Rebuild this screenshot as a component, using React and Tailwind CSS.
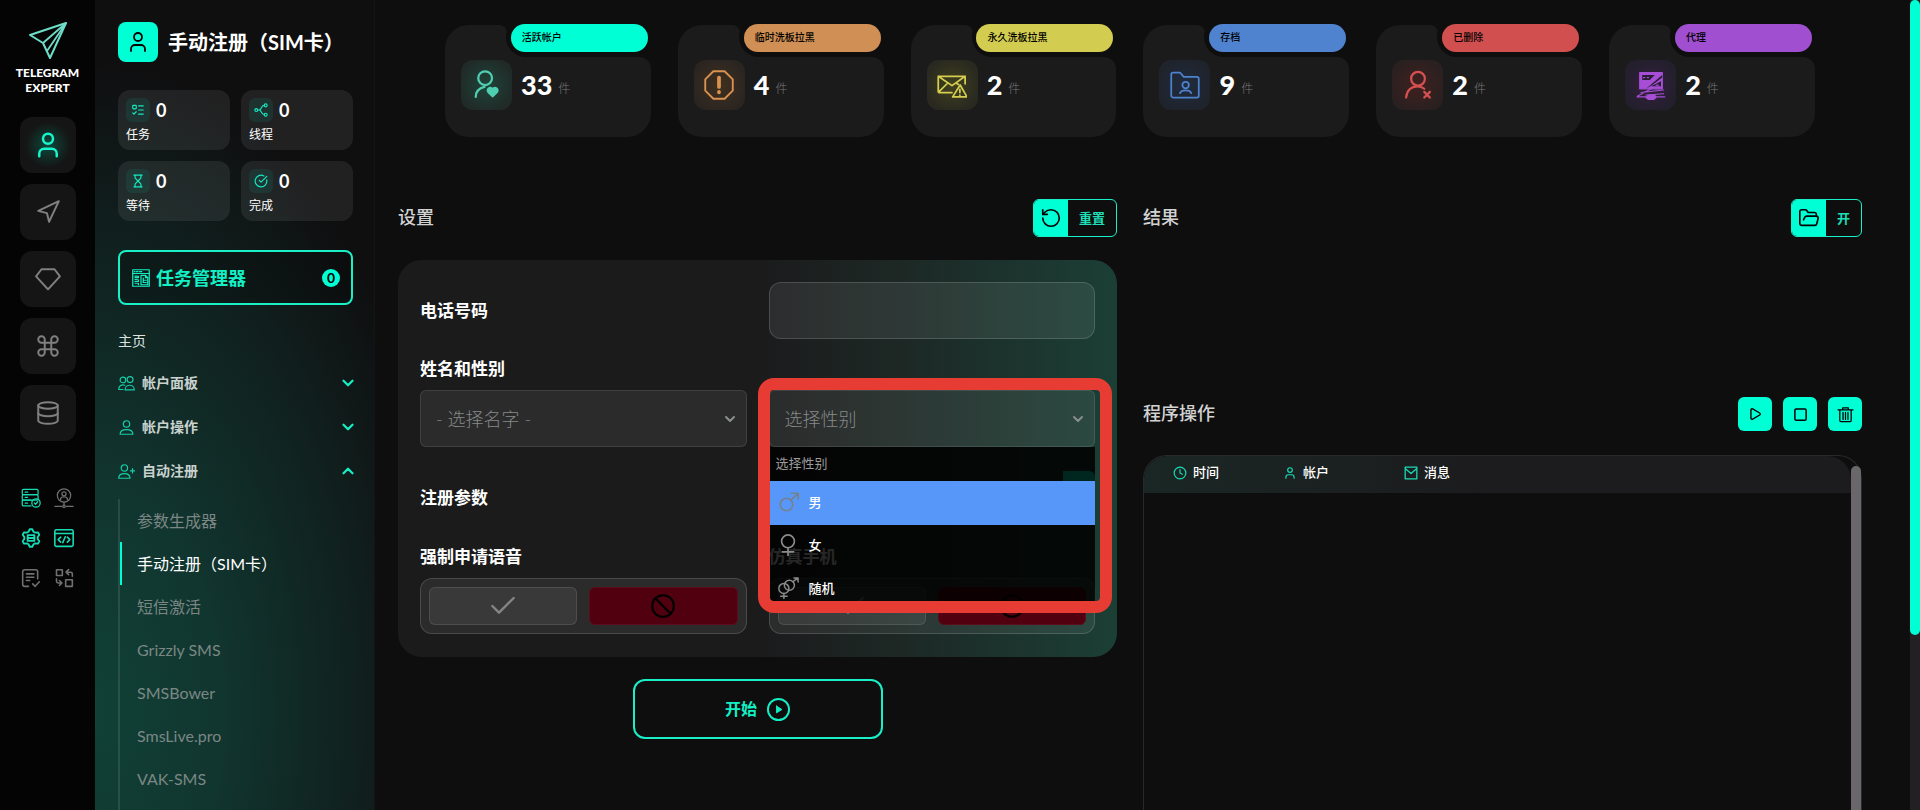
import React from 'react';
import {
  User,
  Navigation,
  Command,
  Database,
  ListTodo,
  Hourglass,
  CircleCheckBig,
  ChevronDown,
  ChevronUp,
  RotateCcw,
  FolderOpen,
  Check,
  Ban,
  Play,
  Square,
  Clock,
} from 'lucide-react';

const Icon = ({ className, sw = 1.5, children }) => (
  <svg
    className={className}
    viewBox="0 0 24 24"
    fill="none"
    stroke="currentColor"
    strokeWidth={sw}
    strokeLinecap="round"
    strokeLinejoin="round"
    aria-hidden="true"
  >
    {children}
  </svg>
);

const Logo = () => (
  <svg className="w-10 h-10" viewBox="0 0 40 40" fill="none" stroke="#6fdcc9" strokeWidth="2" strokeLinejoin="round">
    <path d="M38 3 2 15l13 8 7 15L38 3Z" />
    <path d="M38 3 15 23M38 3 19 31" strokeWidth="1.8" />
  </svg>
);

const DiamondIcon = ({ className }) => (
  <Icon className={className} sw={1.8}>
    <path d="M6 3h12l5 6.500L12 21.500 1 9.500 6 3Z" />
  </Icon>
);

const ThreadsIcon = ({ className }) => (
  <Icon className={className} sw={2}>
    <circle cx="4" cy="12" r="2.500" />
    <circle cx="20" cy="4" r="2.500" />
    <circle cx="20" cy="20" r="2.500" />
    <path d="M6.500 12H9c4 0 3-8 8.500-8M9 12c4 0 3 8 8.500 8" />
  </Icon>
);

const TaskManagerIcon = ({ className }) => (
  <Icon className={className} sw={1.6}>
    <rect x="1" y="1" width="22" height="22" />
    <path d="M1 6h22M3 3.500h1M6 3.500h2M10 3.500h3" />
    <path d="M4 9.500h3M4 14h3M4 19h3M4 11.500h4.500v-2M4 16.500h4.500v-2M8.500 19v2" />
    <path d="M12 8.500h6l3 3V21h-9V8.500Z" />
    <path d="M15 12v6M15 15h4M15 18h4M18 8.500v3h3" />
  </Icon>
);

const GroupIcon = ({ className }) => (
  <Icon className={className} sw={1.6}>
    <circle cx="7" cy="7" r="4" />
    <circle cx="17" cy="6.500" r="4.200" />
    <path d="M10 21h13c0-4-3-6.500-6.500-6.500S10 17 10 21ZM9.500 14.500C5 12.800 1 15 1 20.500h6" />
  </Icon>
);

const PersonIcon = ({ className }) => (
  <Icon className={className} sw={1.7}>
    <circle cx="12" cy="7" r="4.500" />
    <path d="M3 21.500c0-4.500 4-6.500 9-6.500s9 2 9 6.500H3Z" />
  </Icon>
);

const PersonPlusIcon = ({ className }) => (
  <Icon className={className} sw={1.7}>
    <circle cx="9" cy="7" r="4.500" />
    <path d="M1 21.500C1 17 5 15 9 15s8 2 8 6.500H1ZM20.500 8v6M17.500 11h6" />
  </Icon>
);

const ServerCheckIcon = ({ className }) => (
  <Icon className={className}>
    <rect x="1.500" y="1.500" width="19" height="6.500" rx="1.500" />
    <rect x="1.500" y="8" width="19" height="6.500" rx="1.500" />
    <path d="M12 21.500H3A1.500 1.500 0 0 1 1.500 20v-5.500H12M5 5h3M5 11.200h3M5 18h3" />
    <circle cx="18" cy="18" r="5" />
    <path d="m16 18 1.500 1.500 2.500-3" />
  </Icon>
);

const ProxyUserIcon = ({ className }) => (
  <Icon className={className}>
    <circle cx="12" cy="9" r="8" />
    <circle cx="12" cy="7" r="2.500" />
    <path d="M8 14v-1c0-3 8-3 8 0v1M12 17v4M1 22h8M15 22h8" />
    <circle cx="12" cy="22" r="1.500" />
  </Icon>
);

const GearServerIcon = ({ className }) => (
  <Icon className={className} sw={2.2}>
    <path d="M9 4.500 10.500 1.500h3L15 4.500l2 1 3.300-.3 1.700 2.800-2 2.800v2.400l2 2.800-1.700 2.800-3.300-.3-2 1-1.500 3h-3L9 19.500l-2-1-3.300.3L2 16l2-2.800v-2.400L2 8l1.700-2.800 3.300.3 2-1Z" />
    <rect x="8" y="8.500" width="8" height="3.500" />
    <rect x="8" y="12" width="8" height="3.500" />
  </Icon>
);

const CodeWindowIcon = ({ className }) => (
  <Icon className={className} sw={1.900}>
    <rect x="1" y="2" width="22" height="20" rx="2" />
    <path d="M1 6.500h22M8 11l-3 3 3 3M16 11l3 3-3 3M13.500 10.500l-3 7" />
  </Icon>
);

const DocCheckIcon = ({ className }) => (
  <Icon className={className} sw={1.900}>
    <path d="M20 13V4.500A2.500 2.500 0 0 0 17.500 2h-13A2.500 2.500 0 0 0 2 4.500v15A2.500 2.500 0 0 0 4.500 22H9M6.500 7h9M6.500 11h9M6.500 15h4M14 19l3 3 5-5.500" />
  </Icon>
);

const SwapIcon = ({ className }) => (
  <Icon className={className} sw={1.900}>
    <rect x="3" y="2" width="7" height="7" />
    <rect x="14" y="14" width="8" height="8" />
    <path d="M22 10V7a2 2 0 0 0-2-2h-5m2.500-3-3 3 3 3M3 13v3a2 2 0 0 0 2 2h4m-2.500-3 3 3-3 3" />
  </Icon>
);

const UserHeartIcon = ({ className }) => (
  <Icon className={className} sw={1.8}>
    <circle cx="10.500" cy="6.500" r="5.500" />
    <path d="M3 21.500c0-4.500 3-7 7-8" />
    <path d="M16.500 21 13 17.500c-1.500-2 1.500-4.500 3.500-2.200 2-2.300 5 .2 3.500 2.200L16.500 21Z" fill="currentColor" />
  </Icon>
);

const OctagonIcon = ({ className }) => (
  <Icon className={className} sw={1.500}>
    <path d="M7.500 1h9L23 7.500v9L16.500 23h-9L1 16.500v-9L7.500 1Z" />
    <path d="M12 6v7.500M12 17.500v.3" strokeWidth="3" />
  </Icon>
);

const MailAlertIcon = ({ className }) => (
  <Icon className={className} sw={1.400}>
    <path d="M12 18H1.500A1 1 0 0 1 1 17V5h21.500v6M1 5l11 7.500L22.500 5M1.500 17.500 8 11M16 11l1 .5" />
    <path d="M18.500 12 24 21.500H12.500L18.500 12ZM18.300 15.500v2.500M18.300 20v.2" />
  </Icon>
);

const FolderUserIcon = ({ className }) => (
  <Icon className={className} sw={1.400}>
    <path d="M1 3.500A1.500 1.500 0 0 1 2.500 2H8l3 3.500h10.500A1.500 1.500 0 0 1 23 7v13.500a1.500 1.500 0 0 1-1.500 1.500h-19A1.500 1.500 0 0 1 1 20.500v-17Z" />
    <circle cx="12.500" cy="12" r="2.600" />
    <path d="M8 18.500c1-3 8-3 9 0" />
  </Icon>
);

const UserXIcon = ({ className }) => (
  <Icon className={className} sw={1.800}>
    <circle cx="12" cy="7" r="5.500" />
    <path d="M2.500 22c.5-5.500 4-9 9-9 2 0 4 .7 5.500 2M17 17.500l4.500 4.500M21.500 17.500 17 22" />
  </Icon>
);

const ProxyServerIcon = ({ className }) => (
  <Icon className={className} sw={1}>
    <path d="M3 2h18v13H3Z" fill="currentColor" />
    <path d="M5 4h10l-4 4H5ZM12 13l8-4v4ZM8 15l13-11v2L13 12Z" fill="#291c33" stroke="none" />
    <path d="M6 6h1M9 6h1M16 12h2" />
    <path d="M1 21 14 14M4 18l18-2M8 20l14-1M1 21.500h22" />
    <path d="M10 20h5l1 2-2 1.500h-4L8 22Z" fill="currentColor" />
  </Icon>
);

const MailSquareIcon = ({ className }) => (
  <Icon className={className} sw={2.200}>
    <rect x="2" y="2" width="20" height="20" />
    <path d="m3 5 9 8 9-8" />
  </Icon>
);

const TrashIcon = ({ className }) => (
  <Icon className={className} sw={1.800}>
    <path d="M1.500 5.500h21M8 5V2.500h8V5M4 6v14.500A1.500 1.500 0 0 0 5.500 22h13a1.500 1.500 0 0 0 1.500-1.500V6M8.500 9v10M12 9v10M15.500 9v10" />
  </Icon>
);

const MaleIcon = ({ className }) => (
  <Icon className={className} sw={2}>
    <circle cx="9" cy="15" r="7.500" />
    <path d="m14.500 9.500 8-7.500M15 1.500h8v7" />
  </Icon>
);

const FemaleIcon = ({ className }) => (
  <Icon className={className} sw={1.800}>
    <circle cx="12" cy="8" r="7" />
    <path d="M12 15v9M6 19.500h12" />
  </Icon>
);

const BothIcon = ({ className }) => (
  <Icon className={className} sw={1.600}>
    <circle cx="7.500" cy="12.500" r="5.500" />
    <circle cx="13.500" cy="9" r="5.500" />
    <path d="M17.500 5 23 1M18.500 1H23v4.500M7.500 18v6M4 21h7" />
  </Icon>
);

const CirclePlayIcon = ({ className }) => (
  <Icon className={className} sw={2}>
    <circle cx="12" cy="12" r="11" />
    <path d="M10 8.500v7l5.500-3.500L10 8.500Z" fill="currentColor" strokeWidth="1" />
  </Icon>
);

const railButtons = [
  { name: 'accounts', icon: User, active: true },
  { name: 'send', icon: Navigation },
  { name: 'premium', icon: DiamondIcon },
  { name: 'commands', icon: Command },
  { name: 'storage', icon: Database },
];

const railTools = [
  { name: 'server', icon: ServerCheckIcon, on: true },
  { name: 'proxy', icon: ProxyUserIcon },
  { name: 'config', icon: GearServerIcon, on: true },
  { name: 'code', icon: CodeWindowIcon, on: true },
  { name: 'log', icon: DocCheckIcon },
  { name: 'convert', icon: SwapIcon },
];

const counters = [
  { label: '任务', icon: ListTodo },
  { label: '线程', icon: ThreadsIcon },
  { label: '等待', icon: Hourglass },
  { label: '完成', icon: CircleCheckBig },
];

const menu = [
  { label: '帐户面板', icon: GroupIcon },
  { label: '帐户操作', icon: PersonIcon },
  { label: '自动注册', icon: PersonPlusIcon, open: true },
];

const subMenu = ['参数生成器', '手动注册（SIM卡）', '短信激活', 'Grizzly SMS', 'SMSBower', 'SmsLive.pro', 'VAK-SMS'];

const stats = [
  { label: '活跃帐户', value: 33, icon: UserHeartIcon, pill: 'bg-[#00ffd5]', color: 'text-[#4fceb1]', glow: 'bg-[radial-gradient(circle,#1f4439,#202b28_75%)]' },
  { label: '临时洗板拉黑', value: 4, icon: OctagonIcon, pill: 'bg-[#d08f54]', color: 'text-[#d9924f]', glow: 'bg-[radial-gradient(circle,#40301f,#2b2521_75%)]' },
  { label: '永久洗板拉黑', value: 2, icon: MailAlertIcon, pill: 'bg-[#d2cc51]', color: 'text-[#d5ce4f]', glow: 'bg-[radial-gradient(circle,#41401f,#292920_75%)]' },
  { label: '存档', value: 9, icon: FolderUserIcon, pill: 'bg-[#5083cf]', color: 'text-[#4d82cf]', glow: 'bg-[radial-gradient(circle,#202c40,#1f232b_75%)]' },
  { label: '已删除', value: 2, icon: UserXIcon, pill: 'bg-[#d1504f]', color: 'text-[#d4514f]', glow: 'bg-[radial-gradient(circle,#402020,#2b2020_75%)]' },
  { label: '代理', value: 2, icon: ProxyServerIcon, pill: 'bg-[#9f4fd0]', color: 'text-[#a64fd6]', glow: 'bg-[radial-gradient(circle,#35203f,#231f2d_75%)]' },
];

const Rail = () => (
  <aside className="w-[95px] shrink-0 bg-[#040404] flex flex-col items-center pt-5">
    <Logo />
    <div className="mt-[5px] text-center text-xs leading-[15px] font-black text-white">
      TELEGRAM
      <br />
      EXPERT
    </div>
    <nav className="mt-[22px] flex flex-col gap-[11px]">
      {railButtons.map(({ name, icon: I, active }) => (
        <button key={name} aria-label={name} className="w-14 h-14 rounded-xl bg-[#151515] flex items-center justify-center">
          {active ? (
            <span className="p-2 rounded-full bg-[radial-gradient(circle,#0b4a3d,transparent_70%)]">
              <I className="w-[30px] h-[30px] text-[#19f5cb]" strokeWidth={2} />
            </span>
          ) : (
            <I className="w-[26px] h-[26px] text-[#808080]" strokeWidth={1.8} />
          )}
        </button>
      ))}
    </nav>
    <div className="mt-[47px] grid grid-cols-2 gap-x-[13px] gap-y-5">
      {railTools.map(({ name, icon: I, on }) => (
        <button key={name} aria-label={name} className={on ? 'text-[#15dcb4]' : 'text-[#707070]'}>
          <I className="w-5 h-5" />
        </button>
      ))}
    </div>
  </aside>
);

const Sidebar = () => (
  <aside className="w-[280px] shrink-0 pl-[23px] pr-[21px] pt-[22px] bg-[#101211] bg-[radial-gradient(ellipse_130%_80%_at_0%_88%,#104136_0%,#11352f_35%,#101f1d_75%,#0f0f10_100%)] border-r border-[#141414] overflow-hidden">
    <div className="flex items-center gap-[10px]">
      <span className="w-10 h-10 rounded-lg bg-[#00ffd5] text-black flex items-center justify-center">
        <User className="w-6 h-6" strokeWidth={1.8} />
      </span>
      <h1 className="text-xl leading-7 font-bold text-white whitespace-nowrap">手动注册（SIM卡）</h1>
    </div>

    <div className="mt-7 grid grid-cols-2 gap-[11px]">
      {counters.map(({ label, icon: I }) => (
        <div key={label} className="h-[60px] rounded-xl bg-white/8 px-2 pt-2">
          <div className="flex items-center gap-[6px] text-lg leading-6 font-bold text-white">
            <span className="w-6 h-6 rounded-md bg-[#00ffd5]/8 flex items-center justify-center">
              <I className="w-[14px] h-[14px] text-[#17e8bf]" />
            </span>
            0
          </div>
          <div className="mt-[3px] text-xs leading-5 text-white">{label}</div>
        </div>
      ))}
    </div>

    <button className="mt-[29px] w-full h-[55px] pl-3 pr-[11px] rounded-lg border-2 border-[#19f0c8] bg-black/20 flex items-center text-[#13f0c6]">
      <TaskManagerIcon className="w-[18px] h-[18px]" />
      <span className="ml-[6px] text-lg leading-6 font-bold">任务管理器</span>
      <span className="ml-auto w-[18px] h-[18px] rounded-full bg-[#00ffd5] text-black text-sm leading-[18px] font-bold text-center">0</span>
    </button>

    <div className="mt-[26px] text-sm leading-5 text-[#dde2e0]">主页</div>

    <nav className="mt-[10px]">
      {menu.map(({ label, icon: I, open }) => (
        <button key={label} aria-expanded={!!open} className="w-full h-11 flex items-center text-[#c9d2cf]">
          <I className="w-[17px] h-[17px] text-[#15cfa9]" />
          <span className="ml-[7px] text-sm leading-5 font-bold">{label}</span>
          {open ? (
            <ChevronUp className="ml-auto w-[18px] h-[18px] -mr-1 text-[#14efc6]" strokeWidth={3} />
          ) : (
            <ChevronDown className="ml-auto w-[18px] h-[18px] -mr-1 text-[#14efc6]" strokeWidth={3} />
          )}
        </button>
      ))}
      <ul className="mt-[6px] pb-10 border-l-2 border-white/10">
        {subMenu.map((label, i) => (
          <li key={label}>
            <a
              href="#"
              className={
                i === 1
                  ? 'h-[43px] flex items-center pl-[15px] border-l-2 border-[#00ffd5] text-base text-white'
                  : 'h-[43px] flex items-center pl-[17px] text-base text-[#7b8784]'
              }
            >
              {label}
            </a>
          </li>
        ))}
      </ul>
    </nav>
  </aside>
);

const StatCard = ({ label, value, icon: I, pill, color, glow }) => (
  <div className="relative h-28">
    <div className="flex h-8">
      <div className="w-[62px] bg-[#1b1b1c] rounded-tl-3xl rounded-tr-lg" />
      {/* inner curve of the notch under the pill */}
      <div className="w-6 bg-[#1b1b1c] bg-clip-content pt-2 -ml-px">
        <div className="h-full bg-[#0e0e0f] rounded-bl-[20px]" />
      </div>
    </div>
    <div className="h-20 bg-[#1b1b1c] rounded-tr-xl rounded-b-3xl flex items-start pl-4 pt-[3px]">
      <span className={`w-[51px] h-[50px] rounded-xl flex items-center justify-center ${glow}`}>
        <I className={`w-[30px] h-[30px] ${color}`} />
      </span>
      <div className="ml-[9px] h-[50px] flex items-center gap-[6px]">
        <span className="text-[27px] leading-8 font-black text-white">{value}</span>
        <span className="mt-2 text-xs leading-4 font-light text-[#777]">件</span>
      </div>
    </div>
    <div className={`absolute right-[3px] -top-px w-[137px] h-7 rounded-full pl-[11px] text-[10px] leading-[26px] font-medium text-black ${pill}`}>
      {label}
    </div>
  </div>
);

const SplitButton = ({ icon: I, children }) => (
  <button className="h-[38px] flex rounded-md border border-[#19f0c8] overflow-hidden">
    <span className="w-[34px] h-full bg-[#00ffd5] text-black flex items-center justify-center">
      <I className="w-[22px] h-[22px]" strokeWidth={1.8} />
    </span>
    <span className="px-[11px] text-[13px] leading-9 font-bold text-[#1de0ba]">{children}</span>
  </button>
);

const SelectBox = ({ id, children, ...rest }) => (
  <div className="relative">
    <select
      id={id}
      className="appearance-none block w-full h-[57px] pl-[15px] rounded-md border border-white/10 bg-white/7 text-lg font-light text-[#858988] outline-none"
      {...rest}
    >
      <option>{children}</option>
    </select>
    <ChevronDown className="absolute right-[9px] top-[21px] w-4 h-4 text-[#8a8e8c] pointer-events-none" strokeWidth={3} />
  </div>
);

const Toggle = ({ label }) => (
  <div role="group" aria-label={label} className="h-14 p-2 grid grid-cols-2 gap-3 rounded-xl border border-white/15 bg-white/7">
    <button type="button" aria-label="on" className="rounded-md border border-white/10 bg-white/7 flex items-center justify-center text-[#858585]">
      <Check className="w-8 h-8" strokeWidth={1.8} />
    </button>
    <button type="button" aria-label="off" aria-pressed="true" className="rounded-md border border-[#5c0c1a] bg-[#50000f] flex items-center justify-center text-black">
      <Ban className="w-[26px] h-[26px]" strokeWidth={1.9} />
    </button>
  </div>
);

const GenderMenu = () => (
  <div className="absolute z-10 left-px right-0 top-[57px] h-[154px] overflow-hidden bg-black/85 text-[13px] text-white">
    <div className="h-[34px] pl-[6px] leading-8 text-[#9b9b9b]">选择性别</div>
    <ul role="listbox" aria-label="选择性别">
      <li role="option" aria-selected="true" className="h-11 pl-[9px] pb-[3px] flex items-center gap-[10px] bg-[#5897fa] font-medium">
        <MaleIcon className="w-5 h-5 text-[#75818d]" />男
      </li>
      <li role="option" aria-selected="false" className="h-[43px] pl-[5px] pb-[3px] flex items-center gap-2 font-medium">
        <FemaleIcon className="w-[26px] h-[22px] text-[#8b8b8b]" />女
      </li>
      <li role="option" aria-selected="false" className="h-[43px] pl-[5px] pb-[3px] flex items-center gap-2 font-medium">
        <BothIcon className="w-[26px] h-[22px] text-[#8b8b8b]" />随机
      </li>
    </ul>
  </div>
);

const SettingsForm = () => (
  <form className="mt-[23px] px-[22px] pt-[22px] pb-[23px] rounded-3xl bg-[linear-gradient(90deg,#1b1b1c_50%,#1d2825_70%,#1b3f35_100%)] text-[17px] leading-6 text-white">
    <div className="grid grid-cols-2 gap-x-[22px] items-center">
      <label htmlFor="phone" className="font-bold">电话号码</label>
      <input id="phone" type="tel" className="w-full h-[57px] px-4 rounded-xl border border-white/15 bg-white/8 outline-none" />
    </div>

    <div className="mt-[18px]">
      <label htmlFor="name" className="font-bold">姓名和性别</label>
    </div>
    <div className="mt-[9px] grid grid-cols-2 gap-x-[22px]">
      <SelectBox id="name">- 选择名字 -</SelectBox>
      <div className="relative">
        <SelectBox id="gender" aria-label="选择性别">选择性别</SelectBox>
        <GenderMenu />
        <div className="absolute z-20 -left-[11px] -right-[17px] -top-3 h-[235px] rounded-2xl border-12 border-[#e63c34] pointer-events-none" />
      </div>
    </div>

    <div className="mt-6 h-[54px] flex justify-between">
      <h3 className="pt-[15px] font-bold">注册参数</h3>
      <button type="button" aria-label="save" className="w-8 h-8 rounded-r-md bg-[#00ffd5]" />
    </div>

    <div className="mt-5 grid grid-cols-2 gap-x-[22px] gap-y-[9px]">
      <h3 className="font-bold">强制申请语音</h3>
      <h3 className="font-bold">仿真手机</h3>
      <Toggle label="强制申请语音" />
      <Toggle label="仿真手机" />
    </div>
  </form>
);

const columns = [
  { label: '时间', icon: Clock, width: 'w-[110px]' },
  { label: '帐户', icon: User, width: 'w-[121px]' },
  { label: '消息', icon: MailSquareIcon, width: '' },
];

const LogTable = () => (
  <div className="mt-6 h-[520px] flex rounded-t-3xl border border-b-0 border-[#29292b]">
    <div className="flex-1">
      <table className="w-full table-fixed rounded-t-3xl bg-[linear-gradient(90deg,#1a2724,#1c1b1d_50%)]">
        <thead>
          <tr className="h-[37px] text-[13px] text-white">
            {columns.map(({ label, icon: I, width }) => (
              <th key={label} className={`pl-[29px] pb-[3px] font-medium ${width}`}>
                <span className="flex items-center gap-[6px]">
                  <I className="w-[14px] h-[14px] text-[#18dcb5]" />
                  {label}
                </span>
              </th>
            ))}
          </tr>
        </thead>
      </table>
    </div>
    <div className="w-[10px] pt-[10px]">
      <div className="h-full rounded-full bg-[#69676a]" />
    </div>
  </div>
);

const SectionTitle = ({ children }) => <h2 className="pb-[2px] text-lg leading-6 font-medium text-[#d2d2d2]">{children}</h2>;

const squareButton = 'w-[34px] h-[34px] rounded-md bg-[#00ffd5] text-black flex items-center justify-center';

const App = () => {
  return (
    <div className="h-screen flex overflow-hidden bg-[#0e0e0f] font-['Lato','Noto_Sans_CJK_SC',sans-serif]">
      <Rail />
      <Sidebar />

      <main className="flex-1 min-w-0 pl-[23px] pr-12 pt-[25px] overflow-hidden">
        <div className="mx-[47px] grid grid-cols-6 gap-[27px]">
          {stats.map((s) => (
            <StatCard key={s.label} {...s} />
          ))}
        </div>

        <div className="mt-[62px] grid grid-cols-2 gap-[26px]">
          {/* Settings */}
          <section>
            <div className="flex items-center justify-between">
              <SectionTitle>设置</SectionTitle>
              <SplitButton icon={RotateCcw}>重置</SplitButton>
            </div>
            <SettingsForm />
            <button className="mt-[22px] mx-auto w-[250px] h-[60px] rounded-xl border-2 border-[#19f0c8] flex items-center justify-center gap-[10px] text-base font-bold text-[#13f0c6]">
              开始
              <CirclePlayIcon className="w-[23px] h-[23px]" />
            </button>
          </section>

          {/* Results and log */}
          <section>
            <div className="flex items-center justify-between">
              <SectionTitle>结果</SectionTitle>
              <SplitButton icon={FolderOpen}>开</SplitButton>
            </div>
            <div className="mt-40 flex items-center justify-between">
              <SectionTitle>程序操作</SectionTitle>
              <div className="flex gap-[11px]">
                <button aria-label="start" className={squareButton}>
                  <Play className="w-[14px] h-[14px]" strokeWidth={2.4} />
                </button>
                <button aria-label="stop" className={squareButton}>
                  <Square className="w-[15px] h-[15px]" strokeWidth={2.4} />
                </button>
                <button aria-label="clear" className={squareButton}>
                  <TrashIcon className="w-[17px] h-[17px]" />
                </button>
              </div>
            </div>
            <LogTable />
          </section>
        </div>
      </main>

      {/* Page scrollbar */}
      <div className="w-[10px] shrink-0 bg-[#222022]">
        <div className="h-[635px] rounded-full bg-[#00ffd5]" />
      </div>
    </div>
  );
};

export default App;
